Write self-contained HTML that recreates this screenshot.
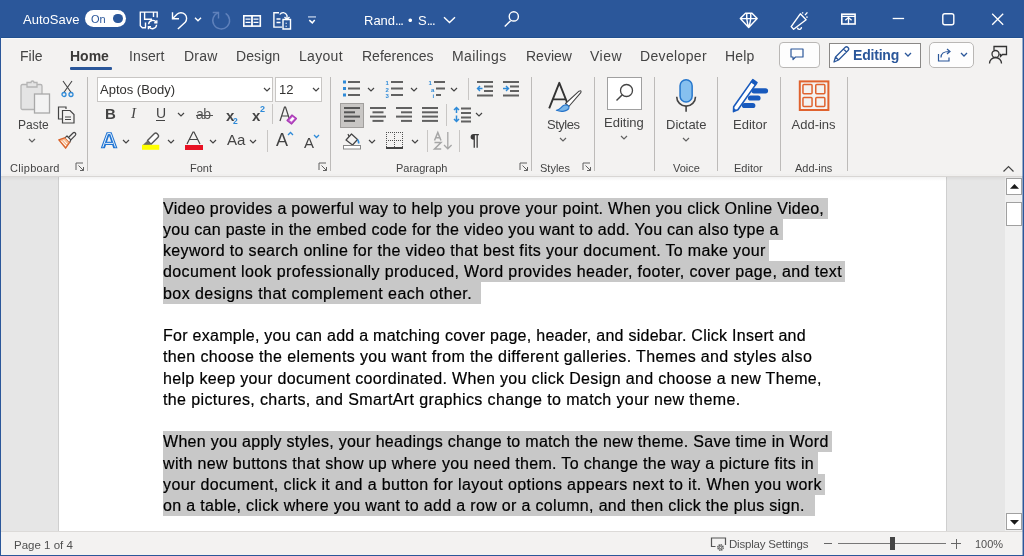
<!DOCTYPE html>
<html><head><meta charset="utf-8">
<style>
*{margin:0;padding:0;box-sizing:border-box}
html,body{width:1024px;height:556px;overflow:hidden;background:#f3f2f1;font-family:"Liberation Sans",sans-serif}
.a{position:absolute;white-space:nowrap}
svg.a{overflow:visible}
#title{position:absolute;left:0;top:0;width:1024px;height:38px;background:#2b579a;border-bottom:1px solid #21508f}
#doc{position:absolute;left:0;top:176px;width:1024px;height:355px;background:#e6e6e6;overflow:hidden}
#page{position:absolute;left:58px;top:0;width:889px;height:400px;background:#fff;border-left:1px solid #cfcfcf;border-right:1px solid #cfcfcf}
.tt{color:#fff;font-size:13px}
.tab{font-size:14px;color:#444}
.ln{position:absolute;left:163px;font-size:16px;color:#000;white-space:nowrap;line-height:21px;-webkit-text-stroke:0.2px #000}
.hl{position:absolute;background:#c8c8c8}
.lbl{font-size:11.5px;color:#444}
</style></head><body><div style="position:absolute;left:0;top:0;width:1024px;height:556px;will-change:transform">
<div id="title"><div class="a tt" style="left:23px;top:12px;">AutoSave</div><div class="a" style="left:85px;top:10px;width:41px;height:17px;border-radius:9px;background:#fff"></div><div class="a " style="left:91px;top:13px;font-size:11px;color:#2b579a">On</div><div class="a" style="left:113px;top:13.5px;width:9.5px;height:9.5px;border-radius:50%;background:#2b579a"></div><svg class="a" style="left:139px;top:11px" width="21" height="20" viewBox="0 0 21 20" ><path d="M18.2 6.5V1.1H1.3V14.8L3.3 16.8H7" fill="none" stroke="#fff" stroke-width="1.4"/><path d="M5.6 1.1V8.2H13 M14.5 1.1V6 M6.5 11.5V16.5" fill="none" stroke="#fff" stroke-width="1.4"/><path d="M9.6 13.2A4.2 4.2 0 0 1 17.4 11.5 M17.6 13.8A4.2 4.2 0 0 1 9.8 15.6" fill="none" stroke="#fff" stroke-width="1.4"/><path d="M17.8 9.2v2.6h-2.6 M9.4 18.2v-2.6h2.6" fill="none" stroke="#fff" stroke-width="1.4"/></svg><svg class="a" style="left:170px;top:11px" width="19" height="20" viewBox="0 0 19 20" ><path d="M2.5 1.3V7.8H9" fill="none" stroke="#fff" stroke-width="1.4"/><path d="M2.5 7.8L7 3.3A5.7 5.7 0 0 1 15.2 11.2L7.9 18.1" fill="none" stroke="#fff" stroke-width="1.4"/></svg><svg class="a" style="left:194px;top:16px" width="8" height="7" viewBox="0 0 8 7" ><path d="M1 1.7l3 3 3-3" fill="none" stroke="#fff" stroke-width="1.4"/></svg><svg class="a" style="left:211px;top:11px" width="21" height="21" viewBox="0 0 21 21" ><path d="M14.6 2.4A8.4 8.4 0 1 1 7.5 1.6" fill="none" stroke="#5f81bb" stroke-width="1.4"/><path d="M1.7 1.5H7.5V7.6" fill="none" stroke="#5f81bb" stroke-width="1.4"/></svg><svg class="a" style="left:242px;top:14px" width="20" height="14" viewBox="0 0 20 14" ><rect x="1.8" y="1.8" width="16.5" height="10.3" fill="none" stroke="#fff" stroke-width="1.6"/><path d="M10 1.5v11" stroke="#fff" stroke-width="1.8"/><path d="M3.5 5.1h5 M3.5 8.4h5 M11.5 5.1h5 M11.5 8.4h5" stroke="#fff" stroke-width="1.2"/></svg><svg class="a" style="left:272px;top:11px" width="21" height="20" viewBox="0 0 21 20" ><path d="M7 1.8H1.9V16.1H10" fill="none" stroke="#fff" stroke-width="1.4"/><path d="M4.5 8h4 M4.5 11.5h4" stroke="#fff" stroke-width="1.3"/><path d="M11 8.5v9.5h7.5v-9.5z" fill="none" stroke="#fff" stroke-width="1.4"/><path d="M14.2 11.7v1 M14.2 14.8v1" stroke="#fff" stroke-width="1.3"/><path d="M7.8 3.5C9.5 0.8 13.5 0.8 15 4.5V8" fill="none" stroke="#fff" stroke-width="1.4"/><path d="M12.5 6l2.5 2.5L17.5 6" fill="none" stroke="#fff" stroke-width="1.4"/></svg><svg class="a" style="left:307px;top:15px" width="10" height="10" viewBox="0 0 10 10" ><path d="M1 1.9H9" stroke="#a7bbdb" stroke-width="1.6"/><path d="M2.3 5.1L5.3 7.9 7.7 5.1" fill="none" stroke="#fff" stroke-width="1.5"/></svg><div class="a tt" style="left:364px;top:13px;font-size:13px">Rand<span style="letter-spacing:-1px">...</span></div><div class="a tt" style="left:408px;top:13px;font-size:13px">&bull;</div><div class="a tt" style="left:418px;top:13px;font-size:13px">S<span style="letter-spacing:-1px">...</span></div><svg class="a" style="left:443px;top:16px" width="13" height="8" viewBox="0 0 13 8" ><path d="M1 1.3l5.5 5.3 5.5-5.3" fill="none" stroke="#fff" stroke-width="1.4"/></svg><svg class="a" style="left:503px;top:11px" width="18" height="18" viewBox="0 0 18 18" ><circle cx="10.8" cy="5.4" r="4.6" fill="none" stroke="#fff" stroke-width="1.4"/><path d="M7.6 9.7L1.75 15.4" fill="none" stroke="#fff" stroke-width="1.4"/></svg><svg class="a" style="left:739px;top:11px" width="20" height="18" viewBox="0 0 20 18" ><path d="M6.5 2.2H13L18.2 7.6 9.7 16.6 1.3 7.6z M1.3 7.6H18.2 M7.8 2.2Q7.2 8.5 9.7 16.6 M11.7 2.2Q12.3 8.5 9.7 16.6" fill="none" stroke="#fff" stroke-width="1.4" stroke-linejoin="round"/></svg><svg class="a" style="left:790px;top:11px" width="20" height="20" viewBox="0 0 20 20" ><path d="M10.3 2.8L16.1 8.7 3.6 18.2 1.2 15.6z" fill="none" stroke="#fff" stroke-width="1.4" stroke-linejoin="round"/><path d="M7.4 16.6a2 2 0 0 0 4-0.5" fill="none" stroke="#fff" stroke-width="1.4"/><path d="M12.6 1.2v1.2 M15 4.1L17.4 1.4 M16.3 6.3L17.6 6" fill="none" stroke="#fff" stroke-width="1.4"/></svg><svg class="a" style="left:840px;top:13px" width="17" height="13" viewBox="0 0 17 13" ><rect x="1.8" y="1.2" width="13.3" height="9.8" fill="none" stroke="#fff" stroke-width="1.6"/><path d="M1.8 3.3H15 M8.5 4.5V11.5" stroke="#fff" stroke-width="1.3"/><path d="M5.3 7.3L8.5 4.5 11.6 7.3" fill="none" stroke="#fff" stroke-width="1.3"/></svg><svg class="a" style="left:892px;top:16px" width="13" height="4" viewBox="0 0 13 4" ><path d="M0.7 2.5h11.4" stroke="#fff" stroke-width="1.3"/></svg><svg class="a" style="left:941px;top:12px" width="15" height="15" viewBox="0 0 15 15" ><rect x="1.8" y="1.8" width="11" height="11" rx="2" fill="none" stroke="#fff" stroke-width="1.4"/></svg><svg class="a" style="left:990px;top:12px" width="15" height="15" viewBox="0 0 15 15" ><path d="M2.2 1.8l11 11 M13.2 1.8l-11 11" fill="none" stroke="#fff" stroke-width="1.3"/></svg></div>
<div class="a" style="left:1px;top:38px;width:1021px;height:1px;background:#fbfaf9"></div>
<div class="a tab" style="left:20px;top:48px;letter-spacing:0px">File</div><div class="a tab" style="left:129px;top:48px;letter-spacing:0.1px">Insert</div><div class="a tab" style="left:184px;top:48px;letter-spacing:0.2px">Draw</div><div class="a tab" style="left:236px;top:48px;letter-spacing:0.1px">Design</div><div class="a tab" style="left:299px;top:48px;letter-spacing:0.3px">Layout</div><div class="a tab" style="left:362px;top:48px;letter-spacing:0px">References</div><div class="a tab" style="left:452px;top:48px;letter-spacing:0.4px">Mailings</div><div class="a tab" style="left:526px;top:48px;letter-spacing:0px">Review</div><div class="a tab" style="left:590px;top:48px;letter-spacing:0.5px">View</div><div class="a tab" style="left:640px;top:48px;letter-spacing:0.35px">Developer</div><div class="a tab" style="left:725px;top:48px;letter-spacing:0.2px">Help</div><div class="a tab" style="left:70px;top:48px;font-weight:bold;color:#3b3a39">Home</div><div class="a" style="left:70px;top:67px;width:42px;height:3px;background:#2b579a;border-radius:1px"></div><div class="a" style="left:779px;top:42px;width:41px;height:26px;border:1px solid #b9b7b5;border-radius:4px;background:#fdfdfd"></div><svg class="a" style="left:790px;top:48px" width="14" height="13" viewBox="0 0 14 13" ><path d="M1 1h12v8H5.5L3 11.5V9H1z" fill="none" stroke="#2b579a" stroke-width="1.2" stroke-linejoin="round"/></svg><div class="a" style="left:829px;top:43px;width:92px;height:25px;border:1px solid #8a8886;background:#fff"></div><svg class="a" style="left:831px;top:45px" width="21" height="20" viewBox="0 0 21 20" ><path d="M3 17l1.5-5L14 2.5a2 2 0 0 1 3 3L7.5 15z M12.5 4l3 3 M4.5 12l3 3" fill="none" stroke="#2b579a" stroke-width="1.3" stroke-linejoin="round"/></svg><div class="a " style="left:853px;top:47px;font-size:14px;font-weight:bold;color:#2b579a;letter-spacing:-0.2px">Editing</div><svg class="a" style="left:904px;top:52px" width="8" height="6" viewBox="0 0 8 6" ><path d="M1 1l3 3 3-3" fill="none" stroke="#2b579a" stroke-width="1.3"/></svg><div class="a" style="left:929px;top:42px;width:45px;height:26px;border:1px solid #b9b7b5;border-radius:5px;background:#fdfdfd"></div><svg class="a" style="left:937px;top:48px" width="15" height="14" viewBox="0 0 15 14" ><path d="M1.5 6v7h10.5v-3.5" fill="none" stroke="#2b579a" stroke-width="1.2"/><path d="M4 9.5c0-4 3-6 8-6 M10 1l3 2.5-3 2.5" fill="none" stroke="#2b579a" stroke-width="1.2"/></svg><svg class="a" style="left:960px;top:52px" width="8" height="6" viewBox="0 0 8 6" ><path d="M1 1l3 3 3-3" fill="none" stroke="#2b579a" stroke-width="1.3"/></svg><svg class="a" style="left:988px;top:45px" width="20" height="20" viewBox="0 0 20 20" ><circle cx="7.5" cy="9" r="3.5" fill="none" stroke="#333" stroke-width="1.3"/><path d="M1.5 18.5a6 6 0 0 1 12 0" fill="none" stroke="#333" stroke-width="1.3"/><path d="M6 5V1.5h12.5v8h-4l-2 2v-2h-1" fill="none" stroke="#333" stroke-width="1.3"/></svg>
<div class="a" style="left:87px;top:77px;width:1px;height:94px;background:#bdbbb9"></div><div class="a" style="left:330px;top:77px;width:1px;height:94px;background:#bdbbb9"></div><div class="a" style="left:531px;top:77px;width:1px;height:94px;background:#bdbbb9"></div><div class="a" style="left:594px;top:77px;width:1px;height:94px;background:#bdbbb9"></div><div class="a" style="left:654px;top:77px;width:1px;height:94px;background:#bdbbb9"></div><div class="a" style="left:717px;top:77px;width:1px;height:94px;background:#bdbbb9"></div><div class="a" style="left:780px;top:77px;width:1px;height:94px;background:#bdbbb9"></div><div class="a" style="left:847px;top:77px;width:1px;height:94px;background:#bdbbb9"></div><svg class="a" style="left:18px;top:79px" width="34" height="36" viewBox="0 0 34 36" ><rect x="3" y="5.5" width="21" height="25" rx="1.5" fill="#e4e4e4" stroke="#b4b4b4" stroke-width="1.3"/><path d="M9 5.5V3.5h4a1.5 1.5 0 0 1 3 0h3V5.5v2.5H9z" fill="#e4e4e4" stroke="#b4b4b4" stroke-width="1.3"/><rect x="16.5" y="15" width="15" height="19" fill="#f3f3f3" stroke="#a8a8a8" stroke-width="1.3"/></svg><div class="a lbl" style="left:18px;top:118px;font-size:12px;letter-spacing:0px">Paste</div><svg class="a" style="left:28px;top:138px" width="8" height="6" viewBox="0 0 8 6" ><path d="M1 1l3 3 3-3" fill="none" stroke="#616161" stroke-width="1.2"/></svg><svg class="a" style="left:61px;top:80px" width="13" height="18" viewBox="0 0 13 18" ><path d="M2 1l8.5 12 M11 1L2.5 13" fill="none" stroke="#444" stroke-width="1.1"/><circle cx="3" cy="14.5" r="2" fill="none" stroke="#2e8ad8" stroke-width="1.3"/><circle cx="10" cy="14.5" r="2" fill="none" stroke="#2e8ad8" stroke-width="1.3"/></svg><svg class="a" style="left:57px;top:106px" width="20" height="18" viewBox="0 0 20 18" ><path d="M9 3V1H1.5v12H5" fill="none" stroke="#444" stroke-width="1.2"/><path d="M5.5 4.5h7.5l4 4V17H5.5z" fill="none" stroke="#444" stroke-width="1.2"/><path d="M8 11h6 M8 13.5h6" stroke="#444" stroke-width="1"/></svg><svg class="a" style="left:57px;top:131px" width="20" height="18" viewBox="0 0 20 18" ><path d="M1.8 8.8L8.2 6.6 12.8 11.2 8.6 17.2z" fill="#f6b88e" stroke="#d9622b" stroke-width="1.3" stroke-linejoin="round"/><path d="M4.5 10l4.5 5 M6.5 9l3.5 4" stroke="#fff" stroke-width="1"/><path d="M8.2 6.6L10 5 13.8 8.8 12.8 11.2" fill="#fff" stroke="#444" stroke-width="1.2" stroke-linejoin="round"/><path d="M11.5 6.5L16 2a1.6 1.6 0 0 1 2.3 2.3L13.8 8.8" fill="none" stroke="#444" stroke-width="1.2"/></svg><div class="a lbl" style="left:10px;top:161.7px;font-size:11px;letter-spacing:0.3px">Clipboard</div><svg class="a" style="left:75px;top:162px" width="10" height="10" viewBox="0 0 10 10" ><path d="M1 8V1h7" fill="none" stroke="#616161" stroke-width="1"/><path d="M3.5 3.5L8.5 8.5 M5 8.5h3.5V5" fill="none" stroke="#616161" stroke-width="1"/></svg><div class="a" style="left:97px;top:77px;width:176px;height:25px;border:1px solid #c8c6c4;background:#fff"></div><div class="a " style="left:100px;top:82px;font-size:13px;color:#323130">Aptos (Body)</div><svg class="a" style="left:263px;top:87px" width="8" height="6" viewBox="0 0 8 6" ><path d="M1 1l3 3 3-3" fill="none" stroke="#444" stroke-width="1.2"/></svg><div class="a" style="left:275px;top:77px;width:47px;height:25px;border:1px solid #c8c6c4;background:#fff"></div><div class="a " style="left:279px;top:82px;font-size:13px;color:#323130">12</div><svg class="a" style="left:312px;top:87px" width="8" height="6" viewBox="0 0 8 6" ><path d="M1 1l3 3 3-3" fill="none" stroke="#444" stroke-width="1.2"/></svg><div class="a " style="left:105px;top:105px;font-size:15px;font-weight:bold;color:#444">B</div><div class="a " style="left:131px;top:105px;font-size:15px;font-style:italic;color:#444;font-family:'Liberation Serif',serif">I</div><div class="a " style="left:156px;top:105px;font-size:14px;color:#444">U</div><div class="a" style="left:156px;top:120px;width:9px;height:1.2px;background:#444"></div><svg class="a" style="left:177px;top:112px" width="8" height="6" viewBox="0 0 8 6" ><path d="M1 1l3 3 3-3" fill="none" stroke="#444" stroke-width="1.2"/></svg><div class="a " style="left:196px;top:106px;font-size:14px;color:#555;letter-spacing:-0.5px">ab</div><div class="a" style="left:196px;top:115px;width:17px;height:1.2px;background:#555"></div><div class="a " style="left:226px;top:107px;font-size:15px;font-weight:bold;color:#444">x</div><div class="a " style="left:233px;top:115.5px;font-size:8.5px;font-weight:bold;color:#2e8ad8">2</div><div class="a " style="left:252px;top:107px;font-size:15px;font-weight:bold;color:#444">x</div><div class="a " style="left:260px;top:104px;font-size:9px;font-weight:bold;color:#2e8ad8">2</div><div class="a" style="left:272px;top:104px;width:1px;height:20px;background:#c8c6c4"></div><svg class="a" style="left:279px;top:105px" width="19" height="19" viewBox="0 0 19 19" ><path d="M1 16L5.5 2h1L11 16 M3 11h7" fill="none" stroke="#444" stroke-width="1.2"/><path d="M8 15.5l5-5.5 4.5 3.5-5 5.5z" fill="#c45ccf" stroke="#a93bb5" stroke-width="1.2" stroke-linejoin="round"/><path d="M10.5 15.2l3-3.3 2 1.5-3 3.3z" fill="#fff"/></svg><svg class="a" style="left:99px;top:131px" width="20" height="19" viewBox="0 0 20 19" ><path d="M1.7 17.3L7.6 1.3H12.6L18.5 17.3H14.3L13.2 14H7L5.9 17.3Z M8 10.8H12.2L10.1 4.8Z" fill="#1f74d3" fill-rule="evenodd"/><path d="M3.8 16.3L8.6 2.6H11.6L16.4 16.3 M6.2 12.4H14" fill="none" stroke="#fff" stroke-width="0.9" stroke-linejoin="round"/></svg><svg class="a" style="left:122px;top:139px" width="8" height="6" viewBox="0 0 8 6" ><path d="M1 1l3 3 3-3" fill="none" stroke="#444" stroke-width="1.2"/></svg><svg class="a" style="left:141px;top:131px" width="20" height="20" viewBox="0 0 20 20" ><path d="M6.5 9.5L13.2 2.8Q14.7 1.3 16.2 2.8L16.8 3.4Q18.3 4.9 16.8 6.4L10 13.2Z" fill="#fff" stroke="#555" stroke-width="1.4" stroke-linejoin="round"/><path d="M6.5 9.5L10 13.2 8.6 14H1.8L5.8 10.2Z" fill="#6b6b6b"/><rect x="1" y="13.8" width="17.3" height="5" fill="#ffff00"/></svg><svg class="a" style="left:167px;top:139px" width="8" height="6" viewBox="0 0 8 6" ><path d="M1 1l3 3 3-3" fill="none" stroke="#444" stroke-width="1.2"/></svg><svg class="a" style="left:184px;top:131px" width="19" height="20" viewBox="0 0 19 20" ><path d="M3 13L9 1h1l6 12 M5.5 8.5h8" fill="none" stroke="#444" stroke-width="1.2"/><rect x="1" y="14" width="18" height="5" fill="#e81123"/></svg><svg class="a" style="left:209px;top:139px" width="8" height="6" viewBox="0 0 8 6" ><path d="M1 1l3 3 3-3" fill="none" stroke="#444" stroke-width="1.2"/></svg><div class="a " style="left:227px;top:131px;font-size:15px;color:#444">Aa</div><svg class="a" style="left:249px;top:139px" width="8" height="6" viewBox="0 0 8 6" ><path d="M1 1l3 3 3-3" fill="none" stroke="#444" stroke-width="1.2"/></svg><div class="a" style="left:267px;top:130px;width:1px;height:22px;background:#c8c6c4"></div><div class="a " style="left:276px;top:130px;font-size:18px;color:#444">A</div><svg class="a" style="left:287px;top:131px" width="7" height="5" viewBox="0 0 7 5" ><path d="M1 4l2.5-2.5L6 4" fill="none" stroke="#2e8ad8" stroke-width="1.3"/></svg><div class="a " style="left:304px;top:134px;font-size:15px;color:#444">A</div><svg class="a" style="left:313px;top:134px" width="7" height="5" viewBox="0 0 7 5" ><path d="M1 1l2.5 2.5L6 1" fill="none" stroke="#2e8ad8" stroke-width="1.3"/></svg><div class="a lbl" style="left:190px;top:161.7px;font-size:11px">Font</div><svg class="a" style="left:318px;top:162px" width="10" height="10" viewBox="0 0 10 10" ><path d="M1 8V1h7" fill="none" stroke="#616161" stroke-width="1"/><path d="M3.5 3.5L8.5 8.5 M5 8.5h3.5V5" fill="none" stroke="#616161" stroke-width="1"/></svg><svg class="a" style="left:342px;top:79px" width="19" height="18" viewBox="0 0 19 18" ><rect x="1" y="1.5" width="3" height="3" fill="#2e8ad8"/><rect x="1" y="8" width="3" height="3" fill="#2e8ad8"/><rect x="1" y="14.5" width="3" height="3" fill="#2e8ad8"/><rect x="6" y="2" width="12" height="2" fill="#616161"/><rect x="6" y="8.5" width="12" height="2" fill="#616161"/><rect x="6" y="15" width="12" height="2" fill="#616161"/></svg><svg class="a" style="left:367px;top:87px" width="8" height="6" viewBox="0 0 8 6" ><path d="M1 1l3 3 3-3" fill="none" stroke="#444" stroke-width="1.2"/></svg><svg class="a" style="left:385px;top:79px" width="19" height="18" viewBox="0 0 19 18" ><text x="0.5" y="6" font-size="6" font-weight="bold" fill="#2e8ad8" font-family="Liberation Sans">1</text><text x="0.5" y="12.5" font-size="6" font-weight="bold" fill="#2e8ad8" font-family="Liberation Sans">2</text><text x="0.5" y="19" font-size="6" font-weight="bold" fill="#2e8ad8" font-family="Liberation Sans">3</text><rect x="6" y="2" width="12" height="2" fill="#616161"/><rect x="6" y="8.5" width="12" height="2" fill="#616161"/><rect x="6" y="15" width="12" height="2" fill="#616161"/></svg><svg class="a" style="left:410px;top:87px" width="8" height="6" viewBox="0 0 8 6" ><path d="M1 1l3 3 3-3" fill="none" stroke="#444" stroke-width="1.2"/></svg><svg class="a" style="left:428px;top:79px" width="19" height="18" viewBox="0 0 19 18" ><text x="0.5" y="6" font-size="6" font-weight="bold" fill="#2e8ad8" font-family="Liberation Sans">1</text><text x="3" y="12.5" font-size="6" font-weight="bold" fill="#2e8ad8" font-family="Liberation Sans">a</text><text x="4.5" y="19" font-size="6" font-weight="bold" fill="#2e8ad8" font-family="Liberation Sans">i</text><rect x="6" y="2" width="11" height="2" fill="#616161"/><rect x="8" y="8.5" width="9" height="2" fill="#616161"/><rect x="8" y="15" width="5" height="2" fill="#616161"/></svg><svg class="a" style="left:450px;top:87px" width="8" height="6" viewBox="0 0 8 6" ><path d="M1 1l3 3 3-3" fill="none" stroke="#444" stroke-width="1.2"/></svg><div class="a" style="left:468px;top:78px;width:1px;height:22px;background:#c8c6c4"></div><svg class="a" style="left:476px;top:80px" width="18" height="17" viewBox="0 0 18 17" ><rect x="1" y="1" width="16" height="2" fill="#616161"/><rect x="8" y="5.5" width="9" height="2" fill="#616161"/><rect x="8" y="10" width="9" height="2" fill="#616161"/><rect x="1" y="14.5" width="16" height="2" fill="#616161"/><path d="M6.5 8.5H1.5 M4 6l-2.5 2.5L4 11" fill="none" stroke="#2e8ad8" stroke-width="1.4"/></svg><svg class="a" style="left:502px;top:80px" width="18" height="17" viewBox="0 0 18 17" ><rect x="1" y="1" width="16" height="2" fill="#616161"/><rect x="8" y="5.5" width="9" height="2" fill="#616161"/><rect x="8" y="10" width="9" height="2" fill="#616161"/><rect x="1" y="14.5" width="16" height="2" fill="#616161"/><path d="M1 8.5h5.5 M4 6l2.5 2.5L4 11" fill="none" stroke="#2e8ad8" stroke-width="1.4"/></svg><div class="a" style="left:340px;top:103px;width:24px;height:25px;background:#c8c6c4;border:1px solid #a19f9d"></div><svg class="a" style="left:344px;top:107px" width="16" height="16" viewBox="0 0 16 16" ><rect x="0" y="0" width="16" height="2" fill="#555"/><rect x="0" y="4.3" width="11" height="2" fill="#555"/><rect x="0" y="8.6" width="16" height="2" fill="#555"/><rect x="0" y="12.9" width="11" height="2" fill="#555"/></svg><svg class="a" style="left:370px;top:107px" width="16" height="16" viewBox="0 0 16 16" ><rect x="0" y="0" width="16" height="2" fill="#616161"/><rect x="2.5" y="4.3" width="11" height="2" fill="#616161"/><rect x="0" y="8.6" width="16" height="2" fill="#616161"/><rect x="2.5" y="12.9" width="11" height="2" fill="#616161"/></svg><svg class="a" style="left:396px;top:107px" width="16" height="16" viewBox="0 0 16 16" ><rect x="0" y="0" width="16" height="2" fill="#616161"/><rect x="5" y="4.3" width="11" height="2" fill="#616161"/><rect x="0" y="8.6" width="16" height="2" fill="#616161"/><rect x="5" y="12.9" width="11" height="2" fill="#616161"/></svg><svg class="a" style="left:422px;top:107px" width="16" height="16" viewBox="0 0 16 16" ><rect x="0" y="0" width="16" height="2" fill="#616161"/><rect x="0" y="4.3" width="16" height="2" fill="#616161"/><rect x="0" y="8.6" width="16" height="2" fill="#616161"/><rect x="0" y="12.9" width="16" height="2" fill="#616161"/></svg><div class="a" style="left:446px;top:104px;width:1px;height:22px;background:#c8c6c4"></div><svg class="a" style="left:453px;top:106px" width="19" height="17" viewBox="0 0 19 17" ><path d="M3.5 1.5v5.5 M1 4l2.5-2.5L6 4 M3.5 9.5v6 M1 13l2.5 2.5L6 13" fill="none" stroke="#2e8ad8" stroke-width="1.5"/><rect x="8" y="1.5" width="10" height="2" fill="#616161"/><rect x="8" y="6" width="10" height="2" fill="#616161"/><rect x="8" y="10.5" width="10" height="2" fill="#616161"/><rect x="8" y="14.5" width="10" height="2" fill="#616161"/></svg><svg class="a" style="left:475px;top:112px" width="8" height="6" viewBox="0 0 8 6" ><path d="M1 1l3 3 3-3" fill="none" stroke="#444" stroke-width="1.2"/></svg><svg class="a" style="left:342px;top:131px" width="20" height="19" viewBox="0 0 20 19" ><path d="M4 9l5.5-6 6 5.5-5 5.5z" fill="none" stroke="#444" stroke-width="1.2" stroke-linejoin="round"/><path d="M7 5.5l-1-2.5" stroke="#444" stroke-width="1.2"/><path d="M15.5 8.5c1 1.5 1.5 2.5 1 4" fill="none" stroke="#2e8ad8" stroke-width="1.6"/><rect x="1.5" y="14.5" width="17" height="3.5" fill="#fff" stroke="#888" stroke-width="1"/></svg><svg class="a" style="left:368px;top:139px" width="8" height="6" viewBox="0 0 8 6" ><path d="M1 1l3 3 3-3" fill="none" stroke="#444" stroke-width="1.2"/></svg><svg class="a" style="left:386px;top:132px" width="17" height="18" viewBox="0 0 17 18" ><rect x="0" y="0" width="1" height="1" fill="#505050"/><rect x="0" y="2" width="1" height="1" fill="#505050"/><rect x="0" y="4" width="1" height="1" fill="#505050"/><rect x="0" y="6" width="1" height="1" fill="#505050"/><rect x="0" y="8" width="1" height="1" fill="#505050"/><rect x="0" y="10" width="1" height="1" fill="#505050"/><rect x="0" y="12" width="1" height="1" fill="#505050"/><rect x="0" y="14" width="1" height="1" fill="#505050"/><rect x="0" y="16" width="1" height="1" fill="#505050"/><rect x="2" y="0" width="1" height="1" fill="#505050"/><rect x="2" y="8" width="1" height="1" fill="#505050"/><rect x="4" y="0" width="1" height="1" fill="#505050"/><rect x="4" y="8" width="1" height="1" fill="#505050"/><rect x="6" y="0" width="1" height="1" fill="#505050"/><rect x="6" y="8" width="1" height="1" fill="#505050"/><rect x="8" y="0" width="1" height="1" fill="#505050"/><rect x="8" y="2" width="1" height="1" fill="#505050"/><rect x="8" y="4" width="1" height="1" fill="#505050"/><rect x="8" y="6" width="1" height="1" fill="#505050"/><rect x="8" y="8" width="1" height="1" fill="#505050"/><rect x="8" y="10" width="1" height="1" fill="#505050"/><rect x="8" y="12" width="1" height="1" fill="#505050"/><rect x="8" y="14" width="1" height="1" fill="#505050"/><rect x="8" y="16" width="1" height="1" fill="#505050"/><rect x="10" y="0" width="1" height="1" fill="#505050"/><rect x="10" y="8" width="1" height="1" fill="#505050"/><rect x="12" y="0" width="1" height="1" fill="#505050"/><rect x="12" y="8" width="1" height="1" fill="#505050"/><rect x="14" y="0" width="1" height="1" fill="#505050"/><rect x="14" y="8" width="1" height="1" fill="#505050"/><rect x="16" y="0" width="1" height="1" fill="#505050"/><rect x="16" y="2" width="1" height="1" fill="#505050"/><rect x="16" y="4" width="1" height="1" fill="#505050"/><rect x="16" y="6" width="1" height="1" fill="#505050"/><rect x="16" y="8" width="1" height="1" fill="#505050"/><rect x="16" y="10" width="1" height="1" fill="#505050"/><rect x="16" y="12" width="1" height="1" fill="#505050"/><rect x="16" y="14" width="1" height="1" fill="#505050"/><rect x="16" y="16" width="1" height="1" fill="#505050"/><rect x="0" y="15" width="17" height="2" fill="#444"/></svg><svg class="a" style="left:411px;top:139px" width="8" height="6" viewBox="0 0 8 6" ><path d="M1 1l3 3 3-3" fill="none" stroke="#444" stroke-width="1.2"/></svg><div class="a" style="left:427px;top:130px;width:1px;height:22px;background:#c8c6c4"></div><svg class="a" style="left:433px;top:131px" width="20" height="20" viewBox="0 0 20 20" ><path d="M1.5 9.5L4.8 1.5 8 9.5 M2.7 6.8H6.8" fill="none" stroke="#a6a6a6" stroke-width="1.5"/><path d="M1.5 11.5H8L1.5 18H8.2" fill="none" stroke="#a6a6a6" stroke-width="1.5"/><path d="M14.8 1v17 M11 14l3.8 3.8 3.8-3.8" fill="none" stroke="#a6a6a6" stroke-width="1.3"/></svg><div class="a" style="left:459px;top:130px;width:1px;height:22px;background:#c8c6c4"></div><div class="a " style="left:470px;top:131px;font-size:17px;font-weight:bold;color:#3a3a3a">&para;</div><div class="a lbl" style="left:396px;top:161.7px;font-size:11px">Paragraph</div><svg class="a" style="left:519px;top:162px" width="10" height="10" viewBox="0 0 10 10" ><path d="M1 8V1h7" fill="none" stroke="#616161" stroke-width="1"/><path d="M3.5 3.5L8.5 8.5 M5 8.5h3.5V5" fill="none" stroke="#616161" stroke-width="1"/></svg><svg class="a" style="left:546px;top:80px" width="38" height="36" viewBox="0 0 38 36" ><path d="M3.2 28.4L13.3 2.8 21.5 23.5 M6.8 19.4H20.5" fill="none" stroke="#333" stroke-width="1.9" stroke-linejoin="round"/><path d="M19.5 23.5L33 11.2Q35.8 9.8 34.8 12.6L22.8 26.5z" fill="#fff" stroke="#444" stroke-width="1.1" stroke-linejoin="round"/><path d="M10.4 30.3C14 30.2 15.2 26.5 18 25.3C21 24.2 23.8 25.8 22.8 28.3C21.5 31.2 15.5 32.3 10.4 30.3z" fill="#79b6ea" stroke="#2573c9" stroke-width="1.2" stroke-linejoin="round"/></svg><div class="a " style="left:547px;top:117px;font-size:13px;letter-spacing:-0.5px;color:#444">Styles</div><svg class="a" style="left:559px;top:137px" width="8" height="6" viewBox="0 0 8 6" ><path d="M1 1l3 3 3-3" fill="none" stroke="#616161" stroke-width="1.2"/></svg><div class="a lbl" style="left:540px;top:161.7px;font-size:11px">Styles</div><svg class="a" style="left:582px;top:162px" width="10" height="10" viewBox="0 0 10 10" ><path d="M1 8V1h7" fill="none" stroke="#616161" stroke-width="1"/><path d="M3.5 3.5L8.5 8.5 M5 8.5h3.5V5" fill="none" stroke="#616161" stroke-width="1"/></svg><div class="a" style="left:607px;top:77px;width:35px;height:33px;border:1px solid #a0a0a0;background:#fff"></div><svg class="a" style="left:614px;top:82px" width="20" height="22" viewBox="0 0 20 22" ><circle cx="12.5" cy="8.5" r="6" fill="none" stroke="#444" stroke-width="1.3"/><path d="M8.3 12.8L2.5 18.5" stroke="#444" stroke-width="1.5"/></svg><div class="a " style="left:604px;top:115px;font-size:13px;color:#444">Editing</div><svg class="a" style="left:620px;top:135px" width="8" height="6" viewBox="0 0 8 6" ><path d="M1 1l3 3 3-3" fill="none" stroke="#616161" stroke-width="1.2"/></svg><svg class="a" style="left:674px;top:78px" width="25" height="36" viewBox="0 0 25 36" ><rect x="6.05" y="1.65" width="12.1" height="22.3" rx="6.05" fill="#86c0ef" stroke="#2677cc" stroke-width="1.5"/><path d="M2.7 18.7a9.4 9.4 0 0 0 18.8 0" fill="none" stroke="#444" stroke-width="1.6"/><path d="M12.1 28v5.8" stroke="#444" stroke-width="1.6"/></svg><div class="a " style="left:666px;top:117px;font-size:13px;color:#444">Dictate</div><svg class="a" style="left:682px;top:137px" width="8" height="6" viewBox="0 0 8 6" ><path d="M1 1l3 3 3-3" fill="none" stroke="#616161" stroke-width="1.2"/></svg><div class="a lbl" style="left:673px;top:161.7px;font-size:11px">Voice</div><svg class="a" style="left:732px;top:78px" width="36" height="36" viewBox="0 0 36 36" ><path d="M22 12.8H33.5 M18.5 20H26 M12.5 27.5H20.8" stroke="#185abd" stroke-width="5.2" stroke-linecap="round"/><path d="M1.5 33.6L1.7 28.8 19.4 3.6 23.6 6.6 5.9 31.8Z" fill="#fff" stroke="#185abd" stroke-width="1.6" stroke-linejoin="round"/><path d="M19.4 3.6L20.8 1.6 25 4.6 23.6 6.6Z" fill="#185abd" stroke="#185abd" stroke-width="1.6" stroke-linejoin="round"/><path d="M1.5 33.6L1.9 30.2 4.3 31.9Z" fill="#185abd"/></svg><div class="a " style="left:733px;top:117px;font-size:13px;color:#444">Editor</div><div class="a lbl" style="left:734px;top:161.7px;font-size:11px">Editor</div><svg class="a" style="left:798px;top:79px" width="33" height="34" viewBox="0 0 33 34" ><rect x="1.8" y="2.4" width="28.6" height="28.6" fill="none" stroke="#e0622e" stroke-width="2"/><rect x="4.95" y="5.55" width="9.1" height="9.1" rx="1" fill="none" stroke="#e0622e" stroke-width="1.5"/><rect x="17.75" y="5.55" width="9.1" height="9.1" rx="1" fill="none" stroke="#e0622e" stroke-width="1.5"/><rect x="4.95" y="18.45" width="9.1" height="9.1" rx="1" fill="none" stroke="#e0622e" stroke-width="1.5"/><rect x="17.75" y="18.45" width="9.1" height="9.1" rx="1" fill="none" stroke="#e0622e" stroke-width="1.5"/></svg><div class="a " style="left:791.5px;top:117px;font-size:13px;color:#444">Add-ins</div><div class="a lbl" style="left:795px;top:161.7px;font-size:11px">Add-ins</div><svg class="a" style="left:1002px;top:165px" width="13" height="8" viewBox="0 0 13 8" ><path d="M1.5 6.5L6.5 1.5l5 5" fill="none" stroke="#444" stroke-width="1.2"/></svg>
<div class="a" style="left:0;top:174px;width:1024px;height:2px;background:#f0efee"></div>
<div id="doc">
<div id="page">
</div>
<div class="a" style="left:1005px;top:0;width:17px;height:355px;background:#f0f0f0"></div>
<div class="a" style="left:0;top:0;width:1024px;height:1px;background:#d8d6d4"></div><div class="a" style="left:0;top:1px;width:1024px;height:4px;background:linear-gradient(rgba(0,0,0,0.05),rgba(0,0,0,0))"></div>
<div class="hl" style="left:163px;top:22px;width:665px;height:21px"></div>
<div class="ln" style="top:21.70px;letter-spacing:0.293px">Video provides a powerful way to help you prove your point. When you click Online Video,</div>
<div class="hl" style="left:163px;top:43px;width:620px;height:21px"></div>
<div class="ln" style="top:42.95px;letter-spacing:0.274px">you can paste in the embed code for the video you want to add. You can also type a</div>
<div class="hl" style="left:163px;top:64px;width:606px;height:21px"></div>
<div class="ln" style="top:64.20px;letter-spacing:0.339px">keyword to search online for the video that best fits your document. To make your</div>
<div class="hl" style="left:163px;top:85px;width:682px;height:21px"></div>
<div class="ln" style="top:85.45px;letter-spacing:0.377px">document look professionally produced, Word provides header, footer, cover page, and text</div>
<div class="hl" style="left:163px;top:106px;width:318px;height:22px"></div>
<div class="ln" style="top:106.70px;letter-spacing:0.446px">box designs that complement each other.</div>
<div class="ln" style="top:149.20px;letter-spacing:0.271px">For example, you can add a matching cover page, header, and sidebar. Click Insert and</div>
<div class="ln" style="top:170.45px;letter-spacing:0.368px">then choose the elements you want from the different galleries. Themes and styles also</div>
<div class="ln" style="top:191.70px;letter-spacing:0.337px">help keep your document coordinated. When you click Design and choose a new Theme,</div>
<div class="ln" style="top:212.95px;letter-spacing:0.384px">the pictures, charts, and SmartArt graphics change to match your new theme.</div>
<div class="hl" style="left:163px;top:255px;width:669px;height:21px"></div>
<div class="ln" style="top:255.45px;letter-spacing:0.290px">When you apply styles, your headings change to match the new theme. Save time in Word</div>
<div class="hl" style="left:163px;top:276px;width:655px;height:22px"></div>
<div class="ln" style="top:276.70px;letter-spacing:0.335px">with new buttons that show up where you need them. To change the way a picture fits in</div>
<div class="hl" style="left:163px;top:298px;width:662px;height:21px"></div>
<div class="ln" style="top:297.95px;letter-spacing:0.387px">your document, click it and a button for layout options appears next to it. When you work</div>
<div class="hl" style="left:163px;top:319px;width:652px;height:21px"></div>
<div class="ln" style="top:319.20px;letter-spacing:0.329px">on a table, click where you want to add a row or a column, and then click the plus sign.</div>
<div class="a" style="left:1006px;top:2px;width:16px;height:17px;background:#fff;border:1px solid #a0a0a0"></div>
<svg class="a" style="left:1009.5px;top:7.5px" width="9" height="5"><path d="M0 4.8L4.5 0 9 4.8z" fill="#1a1a1a"/></svg>
<div class="a" style="left:1006px;top:26px;width:16px;height:24px;background:#fff;border:1px solid #a0a0a0"></div>
<div class="a" style="left:1006px;top:337px;width:16px;height:17px;background:#fff;border:1px solid #a0a0a0"></div>
<svg class="a" style="left:1009.5px;top:344px" width="9" height="5"><path d="M0 0L4.5 4.8 9 0z" fill="#1a1a1a"/></svg>
</div>
<div class="a" style="left:0;top:531px;width:1024px;height:1px;background:#dcdad8"></div>
<div class="a " style="left:14px;top:539px;font-size:11.5px;color:#505050">Page 1 of 4</div><svg class="a" style="left:710px;top:536px" width="18" height="16" viewBox="0 0 18 16" ><path d="M5.5 10.5H1.5V2h14v7" fill="none" stroke="#555" stroke-width="1.2"/><circle cx="10.5" cy="11.5" r="2.6" fill="none" stroke="#555" stroke-width="1.6" stroke-dasharray="1.3 0.7"/><circle cx="10.5" cy="11.5" r="1.2" fill="none" stroke="#555" stroke-width="1"/></svg><div class="a " style="left:729px;top:538px;font-size:11.5px;letter-spacing:-0.2px;color:#505050">Display Settings</div><div class="a" style="left:824px;top:543px;width:8px;height:1px;background:#666"></div><div class="a" style="left:838px;top:543px;width:108px;height:1px;background:#777"></div><div class="a" style="left:890px;top:537px;width:5px;height:13px;background:#444"></div><div class="a" style="left:951px;top:543px;width:10px;height:1px;background:#666"></div><div class="a" style="left:955.5px;top:538.5px;width:1px;height:10px;background:#666"></div><div class="a " style="left:975px;top:538px;font-size:11px;color:#505050">100%</div>
<div class="a" style="left:0;top:0;width:1px;height:556px;background:#2b579a"></div>
<div class="a" style="left:1023px;top:0;width:1px;height:556px;background:#2b579a"></div><div class="a" style="left:1022px;top:0;width:1px;height:556px;background:rgba(43,87,154,0.45)"></div>
<div class="a" style="left:0;top:555px;width:1024px;height:1px;background:#2b579a"></div>
</div></body></html>
